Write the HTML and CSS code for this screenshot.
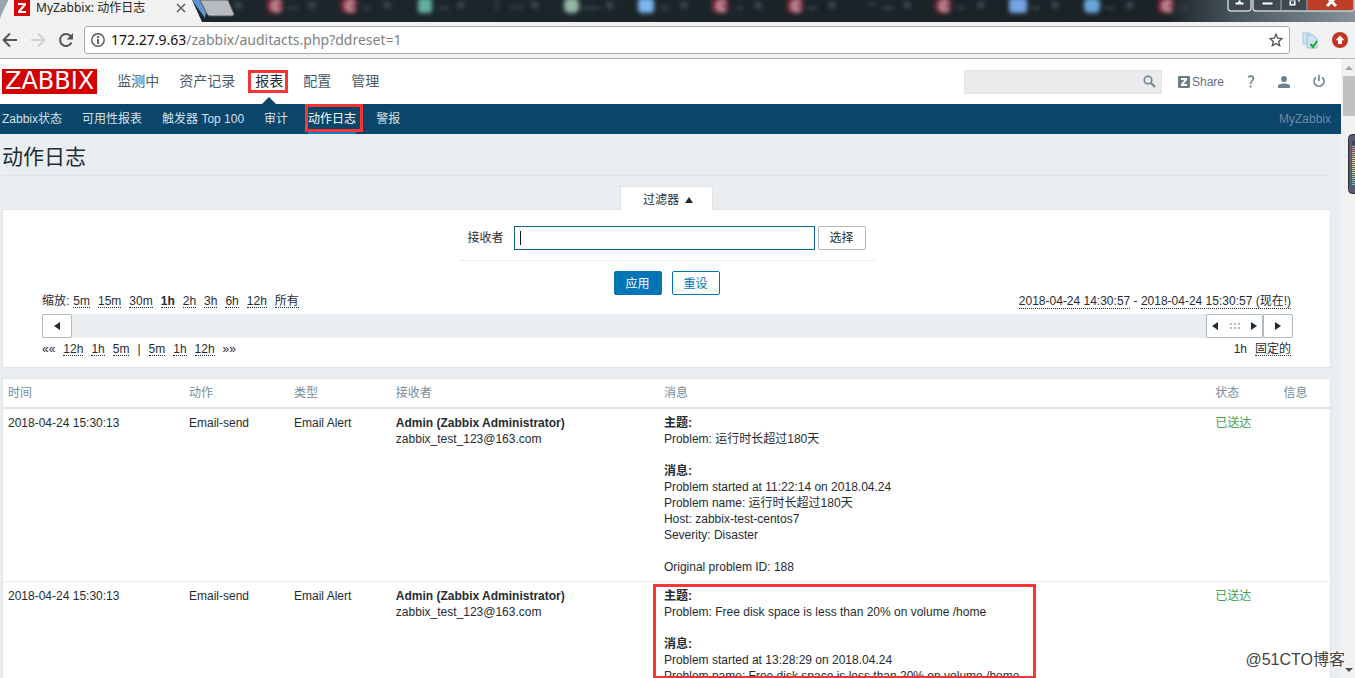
FILE: index.html
```html
<!DOCTYPE html>
<html lang="zh-CN">
<head>
<meta charset="utf-8">
<title>MyZabbix: 动作日志</title>
<link rel="stylesheet" href="styles.css">
</head>
<body>
<div class="window">
  <div class="tabstrip">
    <svg class="tabstrip-art" width="1200" height="22" viewBox="0 0 1200 22" aria-hidden="true">
      <defs>
        <filter id="soft" x="-20%" y="-60%" width="140%" height="220%"><feGaussianBlur stdDeviation="2"/></filter>
        <g id="c"><rect x="-8" y="-2" width="16" height="15" rx="5" fill="#8b2c3e"/><path d="M5 3A4 4 0 1 0 5 9" fill="none" stroke="#c592a0" stroke-width="4"/></g>
        <g id="x" stroke="#4a5960" stroke-width="2"><path d="M-3 2l6 6M3 2l-6 6"/></g>
      </defs>
      <path d="M192 0h16l-3 18z" fill="#5f94d2"/>
      <g filter="url(#soft)">
        <use href="#c" x="275"/><use href="#c" x="349"/><use href="#c" x="720"/><use href="#c" x="795"/><use href="#c" x="943"/><use href="#c" x="1166"/>
        <rect x="418" y="-2" width="14" height="15" rx="3" fill="#62b19e"/>
        <rect x="564" y="-2" width="15" height="15" rx="5" fill="#94b5a6"/>
        <rect x="638" y="-2" width="16" height="15" rx="4" fill="#7cb5f0"/>
        <rect x="1009" y="-2" width="18" height="15" rx="3" fill="#74a4e4"/>
        <rect x="1084" y="-2" width="16" height="15" rx="5" fill="#67a5da"/>
        <use href="#x" x="238"/><use href="#x" x="312"/><use href="#x" x="387"/><use href="#x" x="461"/><use href="#x" x="535"/><use href="#x" x="610"/><use href="#x" x="684"/><use href="#x" x="758"/><use href="#x" x="832"/><use href="#x" x="907"/><use href="#x" x="981"/><use href="#x" x="1055"/><use href="#x" x="1130"/>
        <path d="M288 8h10M362 8h8M439 8h10M510 7h13M582 8h18M660 8h9M735 8h9M808 8h9M882 8h12M956 8h9M1031 8h9M1105 8h9M1180 8h8M497 0v10M868 4h8" stroke="#34434a" stroke-width="3"/>
      </g>
      <path d="M0 0h8L1 17H0z" fill="#9aa5b1"/>
      <path d="M8 0H192L202 22H0V18z" fill="#f2f2f2"/>
      <path d="M200 0H228L234 14Q234 16 232 16H210Q208 16 207 14z" fill="#b8babd" stroke="#565e66"/>
    </svg>
    <div class="tab">
      <svg width="16" height="16" viewBox="0 0 16 16" aria-hidden="true"><path fill="#d90007" d="M0 0h16v16H0z"/><path d="M4 3h8v2l-5 6h5v2H4v-2l5-6H4z" fill="#fff"/></svg>
      <span class="tab-title">MyZabbix: 动作日志</span>
      <button class="bare" aria-label="关闭标签页"><svg width="10" height="10" viewBox="0 0 10 10"><path d="M1 1l8 8M9 1L1 9" stroke="#5f6062" stroke-width="1.500"/></svg></button>
    </div>
    <svg class="window-buttons" width="128" height="14" viewBox="0 0 128 14" aria-hidden="true">
      <path d="M1 -2V8Q1 11 4 11H20Q24 11 24 8V-2M26 -2V8Q26 11 29 11H124Q127 11 127 8V-2" fill="#3f494f" stroke="#c9ced0" stroke-width="1.500"/>
      <path d="M81 0h45v8q0 2-3 2H81z" fill="#bd3d28"/>
      <path d="M54 0v10M80 0v10" stroke="#a9afb2"/>
      <path d="M8 5h9V2h-3V0h-3v2H8zM35 2h11v3H35zM62 0h7v6h-7zM69-2h4v5" fill="#f2f3f3" stroke="#343b40" stroke-width=".8"/>
      <path d="M64 1h3v3h-3z" fill="#555d62"/>
      <path d="M100 6l9-9M109 6l-9-9" stroke="#fff" stroke-width="3"/>
    </svg>
  </div>

  <div class="toolbar">
    <button class="bare" aria-label="后退"><svg width="16" height="16" viewBox="0 0 16 16"><path d="M15 8H2.500M8 1.500L1.500 8 8 14.500" fill="none" stroke="#565656" stroke-width="2"/></svg></button>
    <button class="bare" aria-label="前进"><svg width="16" height="16" viewBox="0 0 16 16"><path d="M1 8h12.500M8 1.500L14.500 8 8 14.500" fill="none" stroke="#d0d0d0" stroke-width="2"/></svg></button>
    <button class="bare" aria-label="重新加载"><svg width="16" height="16" viewBox="0 0 16 16"><path d="M13.500 10.500A6 6 0 1 1 12.800 4.200" fill="none" stroke="#565656" stroke-width="2"/><path d="M15 1v6.500H8.500z" fill="#565656"/></svg></button>
    <div class="address">
      <svg width="14" height="14" viewBox="0 0 14 14" aria-hidden="true"><circle cx="7" cy="7" r="6.200" fill="none" stroke="#555" stroke-width="1.400"/><path d="M7 3v2M7 6v5" stroke="#555" stroke-width="1.800"/></svg>
      <div class="url" role="textbox" aria-label="地址" contenteditable="true" spellcheck="false">172.27.9.63<span class="url-path">/zabbix/auditacts.php?ddreset=1</span></div>
      <button class="bare" aria-label="收藏"><svg width="14" height="14" viewBox="0 0 14 14"><path d="M7 1.200l1.700 4 4.300.4-3.300 2.800 1 4.300L7 10.400l-3.700 2.300 1-4.300L1 5.600l4.300-.4z" fill="none" stroke="#4f4f4f" stroke-width="1.300"/></svg></button>
    </div>
    <svg class="extension" width="16" height="17" viewBox="0 0 16 17" aria-hidden="true"><path d="M1 1h7v11H1z" fill="#cfe4f5" stroke="#a6c7e2"/><path d="M5 3h6l4 4v9H5z" fill="#cfe2f3" stroke="#9dc0dc"/><path d="M8.500 12l2.500 3 4-6" fill="none" stroke="#1bb02a" stroke-width="2"/></svg>
    <svg width="16" height="16" viewBox="0 0 16 16" aria-hidden="true"><circle cx="8" cy="8" r="8" fill="#c43425"/><path d="M8 3.500l4.500 4.700h-2.500V12H6V8.200H3.500z" fill="#fff"/></svg>
  </div>

  <div class="viewport">
    <div class="page">
      <header class="header">
        <a class="logo" href="#">ZABBIX</a>
        <nav class="menu">
          <a href="#">监测中</a><a href="#">资产记录</a><a href="#" class="current">报表</a><a href="#">配置</a><a href="#">管理</a>
        </nav>
        <form class="search"><input type="text" aria-label="搜索"><button type="button" class="bare" aria-label="搜索"><svg width="13" height="13" viewBox="0 0 13 13"><circle cx="5" cy="5" r="3.800" fill="none" stroke="#6b838f" stroke-width="1.600"/><path d="M8 8l4 4" stroke="#6b838f" stroke-width="2"/></svg></button></form>
        <div class="user">
          <a class="share" href="#"><svg width="12" height="12" viewBox="0 0 12 12" aria-hidden="true"><rect width="12" height="12" rx="1" fill="#6b7f89"/><path d="M3 2h6v2L5.500 8H9v2H3V8l3.500-4H3z" fill="#fff"/></svg>Share</a>
          <a href="#" aria-label="帮助"><svg width="8" height="13" viewBox="0 0 8 13"><path d="M1 2.200C2.500.7 6.500.5 6.500 3.500 6.500 5.800 3.500 5.800 3.500 9" fill="none" stroke="#6b838f" stroke-width="1.600"/><path d="M2.600 10.500h1.800v2H2.600z" fill="#6b838f"/></svg></a>
          <a href="#" aria-label="用户"><svg width="12" height="12" viewBox="0 0 12 12"><circle cx="6" cy="3" r="2.900" fill="#6b838f"/><path d="M0 12v-2q0-2.500 6-2.500T12 10v2z" fill="#6b838f"/></svg></a>
          <a href="#" aria-label="退出"><svg width="12" height="13" viewBox="0 0 12 13"><path d="M6 0v6M2.800 2.400a5 5 0 1 0 6.400 0" fill="none" stroke="#6b838f" stroke-width="1.600"/></svg></a>
        </div>
      </header>
      <nav class="submenu">
        <a href="#">Zabbix状态</a><a href="#">可用性报表</a><a href="#">触发器 Top 100</a><a href="#">审计</a><a href="#" class="current">动作日志</a><a href="#">警报</a>
        <span class="server">MyZabbix</span>
      </nav>

      <main class="main">
        <h1>动作日志</h1>
        <div class="filter-tab"><button class="bare">过滤器 <svg width="8" height="6" viewBox="0 0 8 6"><path d="M4 0l4 6H0z" fill="#1f2c33"/></svg></button></div>
        <section class="panel filter">
          <form class="filter-form">
            <div class="field">
              <label for="recipient">接收者</label>
              <div class="text-input"><input id="recipient" type="text"></div>
              <button type="button" class="btn btn-grey">选择</button>
            </div>
            <div class="actions"><button type="button" class="btn btn-primary">应用</button><button type="button" class="btn">重设</button></div>
          </form>
          <div class="timeline">
            <div class="time-row">
              <div class="links zoom"><span>缩放:</span><a href="#">5m</a><a href="#">15m</a><a href="#">30m</a><a href="#"><b>1h</b></a><a href="#">2h</a><a href="#">3h</a><a href="#">6h</a><a href="#">12h</a><a href="#">所有</a></div>
              <div class="range"><a href="#">2018-04-24 14:30:57</a> - <a href="#">2018-04-24 15:30:57 (现在!)</a></div>
            </div>
            <div class="scroll-row">
              <button class="scroll-btn" aria-label="向左"><svg width="6" height="8" viewBox="0 0 6 8"><path d="M6 0v8L0 4z"/></svg></button>
              <div class="handle"><svg width="6" height="8" viewBox="0 0 6 8"><path d="M6 0v8L0 4z"/></svg><svg width="10" height="6" viewBox="0 0 10 6"><path d="M0 1h2M4 1h2M8 1h2M0 5h2M4 5h2M8 5h2" stroke="#acbbc2" stroke-width="2"/></svg><svg width="6" height="8" viewBox="0 0 6 8"><path d="M0 0v8l6-4z"/></svg></div>
              <button class="scroll-btn" aria-label="向右"><svg width="6" height="8" viewBox="0 0 6 8"><path d="M0 0v8l6-4z"/></svg></button>
            </div>
            <div class="time-row">
              <div class="links"><span>««</span><a href="#">12h</a><a href="#">1h</a><a href="#">5m</a><span>|</span><a href="#">5m</a><a href="#">1h</a><a href="#">12h</a><span>»»</span></div>
              <div class="links"><span>1h</span><a href="#">固定的</a></div>
            </div>
          </div>
        </section>

        <section class="panel">
          <table class="log">
            <colgroup><col class="c-time"><col class="c-action"><col class="c-type"><col class="c-user"><col class="c-message"><col class="c-status"><col></colgroup>
            <thead><tr><th>时间</th><th>动作</th><th>类型</th><th>接收者</th><th>消息</th><th>状态</th><th>信息</th></tr></thead>
            <tbody>
              <tr>
                <td>2018-04-24 15:30:13</td><td>Email-send</td><td>Email Alert</td>
                <td><b>Admin (Zabbix Administrator)</b><br>zabbix_test_123@163.com</td>
                <td><b>主题:</b><br>Problem: 运行时长超过180天<br><br><b>消息:</b><br>Problem started at 11:22:14 on 2018.04.24<br>Problem name: 运行时长超过180天<br>Host: zabbix-test-centos7<br>Severity: Disaster<br><br>Original problem ID: 188</td>
                <td class="sent">已送达</td><td></td>
              </tr>
              <tr>
                <td>2018-04-24 15:30:13</td><td>Email-send</td><td>Email Alert</td>
                <td><b>Admin (Zabbix Administrator)</b><br>zabbix_test_123@163.com</td>
                <td class="marked"><b>主题:</b><br>Problem: Free disk space is less than 20% on volume /home<br><br><b>消息:</b><br>Problem started at 13:28:29 on 2018.04.24<br>Problem name: Free disk space is less than 20% on volume /home</td>
                <td class="sent">已送达</td><td></td>
              </tr>
            </tbody>
          </table>
        </section>
      </main>
    </div>
    <div class="scrollbar" aria-hidden="true">
      <svg width="8" height="4" viewBox="0 0 8 4"><path d="M4 0l4 4H0z" fill="#a3a3a3"/></svg>
      <div class="thumb"></div>
      <svg class="down" width="8" height="4" viewBox="0 0 8 4"><path d="M0 0h8L4 4z" fill="#505050"/></svg>
    </div>
    <svg class="dock" width="7" height="60" viewBox="0 0 7 60" aria-hidden="true">
      <rect x=".5" y=".5" width="14" height="59" rx="4" fill="#575b6c" stroke="#2e303b"/>
      <path d="M4 8h3M4 10h3" stroke="#262936"/>
      <path d="M4 12.500h3M4 14.500h3M4 16.500h3" stroke="#e8837b"/>
      <path d="M4 18.500h3M4 20.500h3M4 22.500h3" stroke="#edb46f"/>
      <path d="M4 24.500h3M4 26.500h3M4 28.500h3M4 30.500h3" stroke="#eddc6c"/>
      <path d="M4 32.500h3M4 34.500h3M4 36.500h3M4 38.500h3" stroke="#c5e077"/>
      <path d="M4 40.500h3M4 42.500h3M4 44.500h3" stroke="#8fdc90"/>
      <path d="M4 46.500h3M4 48.500h3M4 50.500h3" stroke="#5fd0c0"/>
    </svg>
    <div class="watermark">@51CTO博客</div>
  </div>
</div>
</body>
</html>
```

FILE: styles.css
```css
*, *::before, *::after { box-sizing: border-box; }
body {
  margin: 0;
  font: 12px/16px "Liberation Sans", "Noto Sans CJK SC", sans-serif;
  color: #1f2c33;
  background: #ebeef0;
}
a { color: inherit; text-decoration: none; }
svg { display: block; flex: none; }
button, input { font: inherit; color: inherit; }
.bare { display: flex; align-items: center; padding: 0; border: 0; background: none; }
.window { height: 100vh; display: flex; flex-direction: column; overflow: hidden; }

/* Browser frame */
.tabstrip {
  position: relative;
  flex: none;
  display: flex;
  justify-content: space-between;
  height: 22px;
  overflow: hidden;
  background: linear-gradient(90deg, #1d272c 0, #1a2226 86%, #46545b 91%, #87939a 100%);
}
.tabstrip-art { position: absolute; top: 0; left: 0; }
.tab {
  position: relative;
  display: flex;
  align-items: center;
  gap: 6px;
  width: 200px;
  height: 16px;
  padding: 0 14px;
  font-family: "Noto Sans", "Noto Sans CJK SC", sans-serif;
  color: #222;
}
.tab-title { flex: 1; white-space: nowrap; }
.window-buttons { position: relative; }
.toolbar {
  flex: none;
  display: flex;
  align-items: center;
  gap: 12px;
  height: 37px;
  padding: 0 7px 0 2px;
  background: #f2f2f2;
  border-bottom: 1px solid #b3b4b5;
}
.address {
  flex: 1;
  display: flex;
  align-items: center;
  gap: 6px;
  height: 28px;
  margin-left: -2px;
  padding: 0 6px;
  background: #fff;
  border: 1px solid #a5a8ac;
  border-radius: 3px;
}
.extension { margin-right: 2px; }
.url {
  flex: 1;
  font: 14px/20px "Noto Sans", sans-serif;
  color: #111;
  outline: 0;
}
.url-path { color: #808080; }

.viewport { position: relative; flex: 1; display: flex; min-height: 0; }
.page { flex: 1; min-width: 0; overflow: hidden; }
.scrollbar {
  display: flex;
  flex-direction: column;
  align-items: center;
  width: 14px;
  padding: 7px 0 0 2px;
  background: #f1f1f1;
}
.thumb { width: 12px; height: 40px; margin-top: 6px; background: #c1c1c1; }
.down { margin: auto 0 6px; }
.dock { position: absolute; top: 75px; right: 0; }
.watermark {
  position: absolute;
  right: 10px;
  bottom: 8px;
  font-size: 16px;
  line-height: 20px;
  color: #444;
  text-shadow: 1px 1px #fff, -1px -1px #fff;
}

/* Header */
.header {
  display: flex;
  align-items: center;
  height: 45px;
  padding: 0 16px 0 2px;
  background: #fff;
}
.logo {
  padding: 0 3px;
  font: 24px/25px "DejaVu Sans", sans-serif;
  color: #fff;
  background: #d40000;
}
.menu {
  flex: 1;
  display: flex;
  gap: 20px;
  padding: 0 0 2px 20px;
  font-size: 14px;
  line-height: 20px;
  color: #4c5a62;
}
.menu .current { position: relative; color: #1f2c33; }
.menu .current::before,
.submenu .current::before {
  content: "";
  position: absolute;
  inset: -1px -5px -2px -7px;
  border: 3px solid #f93535;
}
.menu .current::after {
  content: "";
  position: absolute;
  left: 6px;
  bottom: -14px;
  border: solid transparent;
  border-width: 0 8px 8px;
  border-bottom-color: #0a466a;
}
.search {
  display: flex;
  align-items: center;
  width: 198px;
  height: 24px;
  padding-right: 5px;
  background: #ebebeb;
  border: 1px solid #e1e3e4;
}
.search input { flex: 1; min-width: 0; border: 0; background: none; outline: 0; }
.user { display: flex; align-items: center; gap: 23px; padding-left: 16px; color: #5f717b; }
.share { display: flex; align-items: center; gap: 2px; }
.submenu {
  display: flex;
  gap: 20px;
  height: 30px;
  padding: 0 10px 0 2px;
  line-height: 30px;
  color: #d5e0e7;
  background: #0a466a;
}
.submenu .current { position: relative; color: #fff; border-bottom: 2px solid #0f7ec9; }
.submenu .current::before { inset: 0 -7px 0 -3px; }
.server { margin-left: auto; color: #6a8da2; }

/* Content */
.main { padding: 0 10px 0 2px; }
h1 {
  margin: 0;
  padding: 11px 0 6px;
  font-size: 21px;
  font-weight: 400;
  line-height: 24px;
  border-bottom: 1px solid #dfe4e7;
}
.filter-tab { display: flex; justify-content: center; padding-top: 10px; }
.filter-tab button {
  position: relative;
  gap: 6px;
  height: 24px;
  margin-bottom: -1px;
  padding: 2px 19px 0 22px;
  background: #fff;
  border: 1px solid #dfe4e7;
  border-bottom: 0;
}
.panel { margin-bottom: 10px; background: #fff; border: 1px solid #dfe4e7; }
.filter { padding: 15px 37px 11px 39px; }
.filter-form { width: 418px; margin: 0 auto; padding-right: 2px; }
.field {
  display: flex;
  align-items: center;
  padding: 0 9px 10px;
  border-bottom: 1px solid #ebeef0;
}
.text-input { flex: 1; display: flex; margin: 1px 3px 0 10px; position: relative; }
.text-input::after {
  content: "";
  position: absolute;
  left: 6px;
  top: 5px;
  height: 14px;
  border-left: 1px solid #111;
}
.text-input input {
  width: 100%;
  height: 24px;
  padding: 0 5px;
  border: 1px solid #0f6196;
  outline: 0;
  background: #fff;
}
.btn {
  width: 48px;
  height: 24px;
  padding: 1px 0 0;
  color: #0275b8;
  background: #fff;
  border: 1px solid #0275b8;
  border-radius: 2px;
}
.btn-grey { color: #1f2c33; border-color: #acbbc2; }
.btn-primary { color: #fff; background: #0275b8; }
.actions { display: flex; justify-content: center; gap: 10px; padding-top: 10px; }
.time-row { display: flex; justify-content: space-between; padding-right: 2px; line-height: 12px; }
.time-row a { border-bottom: 1px dotted #1f2c33; }
.links { display: flex; gap: 8px; }
.zoom span { margin-right: -4px; }
.scroll-row { display: flex; height: 24px; margin: 6px 0 5px; background: #e9edf0; }
.scroll-btn, .handle {
  display: flex;
  align-items: center;
  justify-content: center;
  width: 30px;
  padding: 0;
  background: #fff;
  border: 1px solid #acbbc2;
  border-radius: 2px;
}
.handle { justify-content: space-between; width: 57px; margin-left: auto; padding: 0 5px; }
.scroll-row path { fill: #1f2c33; }

.log { width: 100%; table-layout: fixed; border-collapse: separate; border-spacing: 0; }
.c-time { width: 13.64%; }
.c-action { width: 7.91%; }
.c-type { width: 7.68%; }
.c-user { width: 20.2%; }
.c-message { width: 41.55%; }
.c-status { width: 5.15%; }
.log th {
  padding: 6px 5px;
  font-weight: 400;
  text-align: left;
  color: #768d99;
  border-bottom: 2px solid #dfe4e7;
}
.log td { padding: 6px 5px; vertical-align: top; border-bottom: 1px solid #ebeef0; }
.log .sent { color: #429e47; }
.marked { position: relative; }
.marked::after {
  content: "";
  position: absolute;
  top: 2px;
  left: -6px;
  width: 383px;
  height: 95px;
  border: 3px solid #f93535;
}
```
